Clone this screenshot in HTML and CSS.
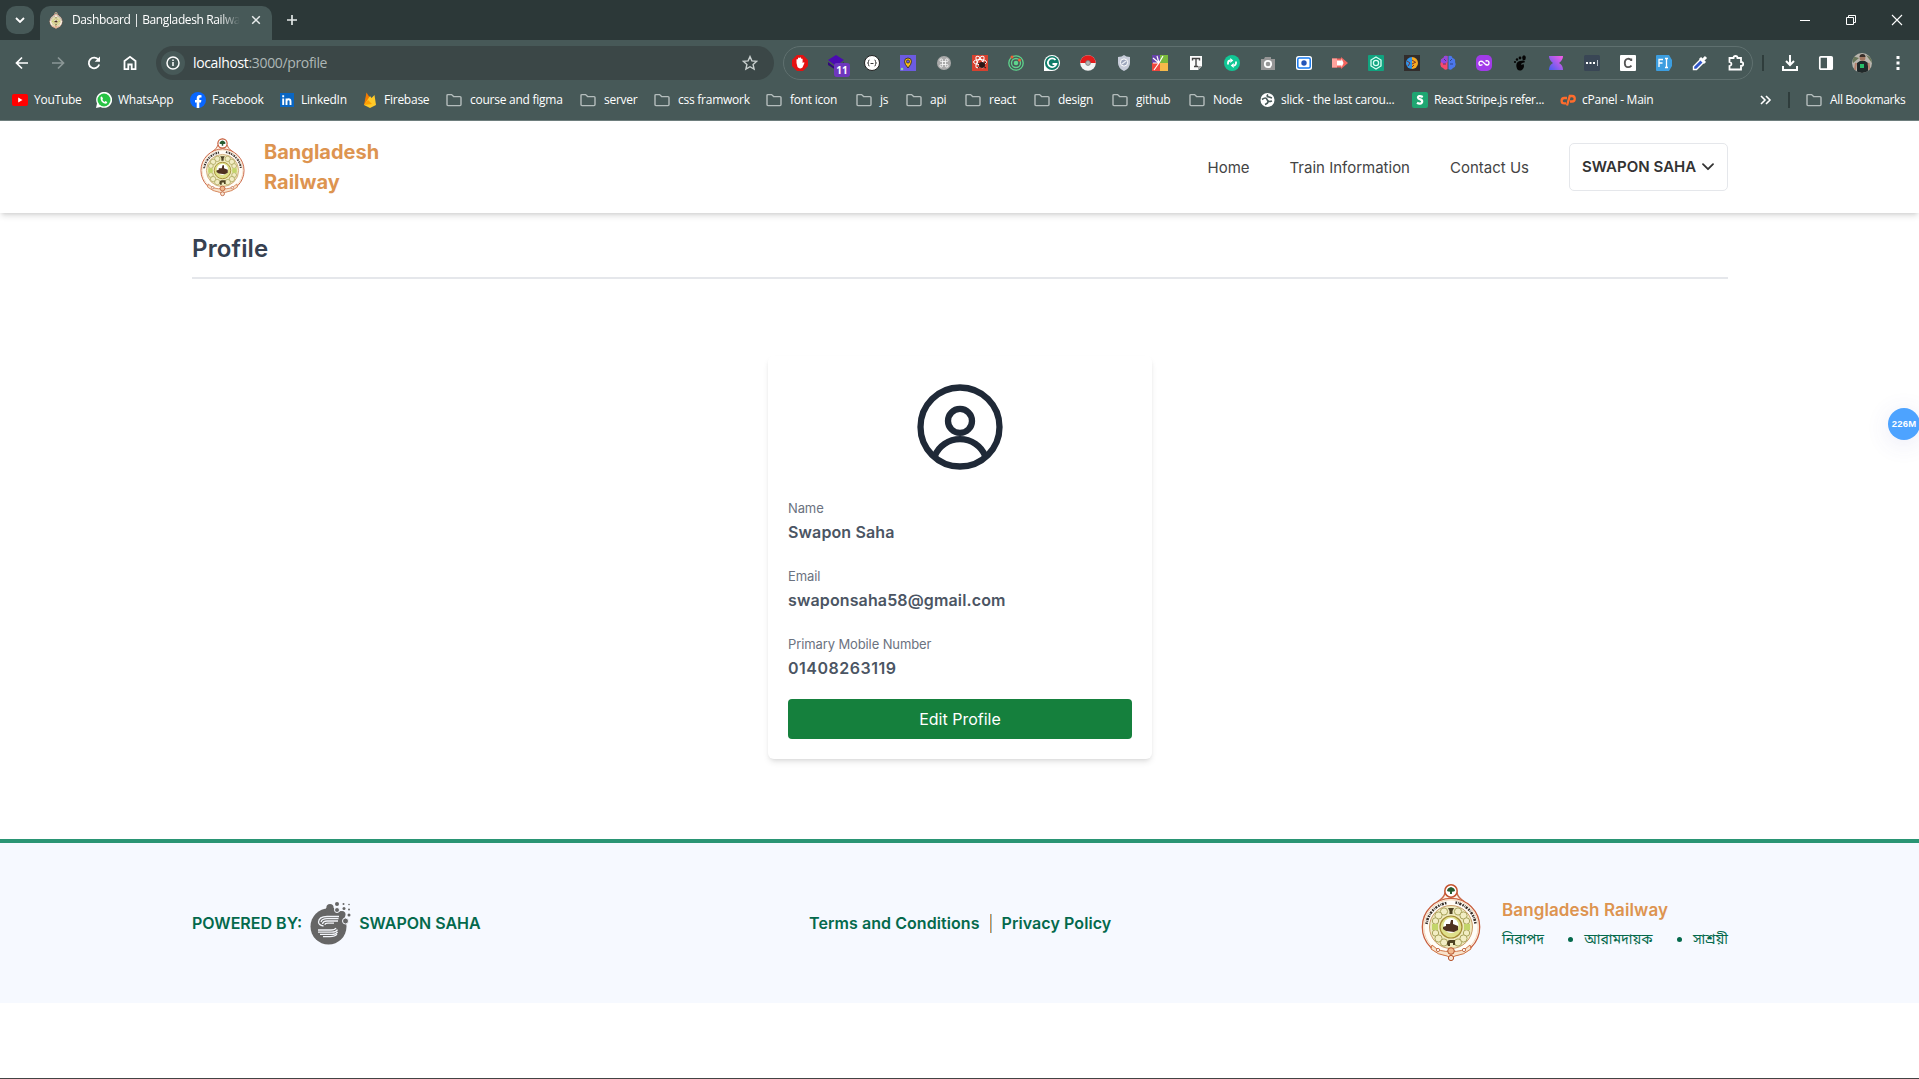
FILE: index.html
```html
<!DOCTYPE html>
<html lang="en">
<head>
<meta charset="utf-8">
<title>Dashboard | Bangladesh Railway</title>
<link rel="stylesheet" href="styles.css">
</head>
<body>
<svg class="sprite" aria-hidden="true">
  <symbol id="folder" viewBox="0 0 16 16"><path d="M1 3.6q0-1 1-1h3.6l2 2H14q1 0 1 1v7q0 1-1 1H2q-1 0-1-1z" fill="none" stroke="#b4bdbc" stroke-width="1.4"/></symbol>
  <symbol id="emblem" viewBox="0 0 60 78">
    <path d="M16 18q7-4 8-9h12q1 5 8 9" fill="#fff4e8" stroke="#c96a48" stroke-width="1.300"/>
    <circle cx="30" cy="7" r="6.200" fill="#fff" stroke="#c4532f" stroke-width="1.500"/>
    <circle cx="30" cy="43" r="28.700" fill="#fffdf8" stroke="#c8603f" stroke-width="1.300"/>
    <circle cx="30" cy="43" r="27.200" fill="none" stroke="#f0cda9" stroke-width=".8"/>
    <path d="M26 7q0-3 4-4 4 1 4 4-2 1-3 .6V10h-2V7.600Q28 8 26 7z" fill="#285b31"/>
    <path d="M5.500 40a24.500 24.500 0 0 1 20-21M34.500 18.500a24.500 24.500 0 0 1 20 21.500" fill="none" stroke="#3a3029" stroke-width="2.600" stroke-dasharray="1.600 .9 .7 .8 2.200 1.100"/>
    <circle cx="30" cy="43" r="21.500" fill="#efeabf" stroke="#c99a68" stroke-width="1"/>
    <g fill="#f2edc4" stroke="#a9a45c" stroke-width="1">
      <circle cx="37" cy="27.500" r="3.600"/><circle cx="23" cy="27.500" r="3.600"/><circle cx="42.500" cy="31.500" r="3.600"/><circle cx="17.500" cy="31.500" r="3.600"/>
      <circle cx="45.500" cy="37" r="3.200"/><circle cx="14.500" cy="37" r="3.200"/><circle cx="45.500" cy="49" r="3.200"/><circle cx="14.500" cy="49" r="3.200"/>
      <circle cx="42.500" cy="54.500" r="3.600"/><circle cx="17.500" cy="54.500" r="3.600"/><circle cx="37" cy="58.500" r="3.600"/><circle cx="23" cy="58.500" r="3.600"/>
    </g>
    <path d="M11 40h6v6h-6zM43 40h6v6h-6z" fill="#c3d56a"/>
    <circle cx="30" cy="43" r="11" fill="#dfe08a" stroke="#a38a35" stroke-width="1.200"/>
    <circle cx="30" cy="41.500" r="7.500" fill="#fff"/>
    <path d="M22 43l3-1v-2h4l1-4h2v4l5 2v4l-4 2-8-1-3-2z" fill="#4f3221"/>
    <path d="M27 24h6l-1.500 3v3h-3v-3zM26 60q0-4 3-4h5v5h-2v-2h-3v3h-2z" fill="#4e4223"/>
    <path d="M11 61q8 8 19 6 11 2 19-6l1 4q-7 6-16 7l-4 2-4-2q-9-1-16-7z" fill="#f8e3cb" stroke="#cf7446" stroke-width="1"/>
    <circle cx="30" cy="67" r="3.300" fill="#f1b98e" stroke="#b5532c"/>
    <circle cx="30" cy="74" r="2.600" fill="#f9e7d5" stroke="#b5532c"/>
    <circle cx="17" cy="66" r="1.600" fill="#fff" stroke="#b5532c" stroke-width=".8"/><circle cx="43" cy="66" r="1.600" fill="#fff" stroke="#b5532c" stroke-width=".8"/>
  </symbol>
</svg>

<div class="browser">
  <div class="tabstrip">
    <div class="tab-search"><svg width="10" height="6" viewBox="0 0 10 6"><path d="M1 1l4 4 4-4" fill="none" stroke="#fff" stroke-width="1.800"/></svg></div>
    <div class="tab">
      <svg class="favicon" width="14" height="17"><use href="#emblem"/></svg>
      <span class="tab-title">Dashboard | Bangladesh Railway</span>
      <svg width="10" height="10" viewBox="0 0 10 10"><path d="M1.200 1.200l7.600 7.600M8.800 1.200L1.200 8.800" stroke="#e8ecec" stroke-width="1.500"/></svg>
    </div>
    <svg class="plus" width="12" height="12" viewBox="0 0 12 12"><path d="M6 1v10M1 6h10" stroke="#e3e8e7" stroke-width="1.700"/></svg>
    <div class="window-buttons">
      <svg width="12" height="12" viewBox="0 0 12 12"><path d="M1 6.500h10" stroke="#fff"/></svg>
      <svg width="12" height="12" viewBox="0 0 12 12"><path d="M1.500 3.500h7v7h-7zM3.500 3.500v-2h7v7h-2" fill="none" stroke="#fff"/></svg>
      <svg width="12" height="12" viewBox="0 0 12 12"><path d="M1 1l10 10M11 1L1 11" stroke="#fff" stroke-width="1.100"/></svg>
    </div>
  </div>

  <div class="toolbar">
    <div class="nav-buttons">
      <svg viewBox="0 0 16 16"><path d="M14 8H3M8 2.500L2.500 8 8 13.500" fill="none" stroke="#fff" stroke-width="1.700"/></svg>
      <svg viewBox="0 0 16 16"><path d="M2 8h11M8 2.500L13.500 8 8 13.500" fill="none" stroke="#8b9796" stroke-width="1.700"/></svg>
      <svg viewBox="0 0 16 16"><path d="M13.200 9.500A5.300 5.300 0 1 1 12.500 5" fill="none" stroke="#fff" stroke-width="1.800"/><path d="M14 1.500v5.300H8.700z" fill="#fff"/></svg>
      <svg viewBox="0 0 16 16"><path d="M2.500 6L8 1.800 13.500 6v8.200H9.700V9.500H6.300v4.700H2.500z" fill="none" stroke="#fff" stroke-width="1.800"/></svg>
    </div>
    <div class="address">
      <span class="site-info"><svg width="14" height="14" viewBox="0 0 14 14"><circle cx="7" cy="7" r="6" fill="none" stroke="#fff" stroke-width="1.500"/><path d="M7 6v4M7 3.500v1.500" stroke="#fff" stroke-width="1.500"/></svg></span>
      <span class="url"><b>localhost</b>:3000/profile</span>
      <svg class="star" width="16" height="16" viewBox="0 0 16 16"><path d="M8 1.600l1.900 4.300 4.700.5-3.500 3.100 1 4.600L8 11.700l-4.100 2.400 1-4.600L1.400 6.400l4.700-.5z" fill="none" stroke="#c9d0cf" stroke-width="1.400"/></svg>
    </div>
    <div class="extensions">
      <svg viewBox="0 0 16 16"><path d="M5 0h6l5 5v6l-5 5H5l-5-5V5z" fill="#e31111"/><path d="M4.500 8V4.500q.8-.8 1.500 0V3q.8-.8 1.500 0 .8-1.300 1.600 0v1q.9-.8 1.500 0v4l1.200-.8q1 .1.500 1L10.500 12.500q-3 2-5-.5z" fill="#fff"/></svg>
      <span class="ext-badged"><svg viewBox="0 0 16 16"><path d="M8 0l8 5-8 6-8-6z" fill="#4b0bb2"/><path d="M0 7l8 6 8-6v3l-8 5-8-5z" fill="#32087c"/></svg><span class="badge">11</span></span>
      <svg viewBox="0 0 16 16"><circle cx="8" cy="8" r="7.500" fill="#fff" stroke="#222"/><path d="M5.500 5Q4.300 5 4.500 6.500T3.500 8q1.200 0 1 1.500T5.500 11M10.500 5q1.200 0 1 1.500t1 1.500q-1.200 0-1 1.500t-1 1.500M6.500 8.500h3" fill="none" stroke="#222" stroke-width=".9"/></svg>
      <svg viewBox="0 0 16 16"><path d="M0 0h16v16H0z" fill="#6c5be0"/><path d="M8 13Q4.500 9 4.500 6.500a3.500 3.500 0 0 1 7 0Q11.500 9 8 13z" fill="#f9bd13" stroke="#222" stroke-width=".8"/><circle cx="8" cy="6.500" r="1.600" fill="#6c5be0" stroke="#222" stroke-width=".7"/><circle cx="2" cy="14" r="1.300" fill="#8fd6a0"/></svg>
      <svg viewBox="0 0 16 16"><circle cx="8" cy="8" r="7" fill="#aaa"/><path d="M6.500 6.500h3v3h-3zM6.500 6.500h-1a1.300 1.300 0 1 1 1-1zM9.500 6.500v-1a1.300 1.300 0 1 1 1 1zM9.500 9.500h1a1.300 1.300 0 1 1-1 1zM6.500 9.500v1a1.300 1.300 0 1 1-1-1z" fill="none" stroke="#fff" stroke-width=".8"/></svg>
      <svg viewBox="0 0 16 16"><path d="M0 0h16v16H0z" fill="#d8412f"/><g fill="none" stroke="#fff"><ellipse cx="8" cy="7" rx="6.500" ry="2.500"/><ellipse cx="8" cy="7" rx="6.500" ry="2.500" transform="rotate(60 8 7)"/><ellipse cx="8" cy="7" rx="6.500" ry="2.500" transform="rotate(120 8 7)"/></g><circle cx="10" cy="10" r="3" fill="#2a1515"/><path d="M6 8l8 5M6 13l8-6" stroke="#2a1515"/></svg>
      <svg viewBox="0 0 16 16"><g fill="none" stroke="#5fd38c" stroke-width="1.300"><circle cx="8" cy="8" r="7.200"/><circle cx="8" cy="8" r="4.500"/></g><circle cx="8" cy="8" r="2.300" fill="#5fd38c"/><circle cx="4" cy="2" r="1.500" fill="#ef5f37"/><circle cx="11.500" cy="5" r="1.500" fill="#ef5f37"/></svg>
      <svg viewBox="0 0 16 16"><path d="M0 16V8a8 8 0 1 1 8 8z" fill="#fff"/><circle cx="8" cy="8" r="7" fill="#0e7b68"/><path d="M11.500 5A4.300 4.300 0 1 0 12.300 9H8.500" fill="none" stroke="#fff" stroke-width="1.800"/></svg>
      <svg viewBox="0 0 16 16"><circle cx="8" cy="8" r="7.800" fill="#f3f3f3"/><path d="M.2 8a7.800 7.800 0 0 1 15.600 0z" fill="#e31b1b"/><circle cx="8" cy="8" r="2.400" fill="#b5b5b5" stroke="#777" stroke-width=".8"/></svg>
      <svg viewBox="0 0 16 16"><path d="M2 2q4 0 6-2 2 2 6 2v6q0 5-6 8-6-3-6-8z" fill="#c7ccd9"/><circle cx="8" cy="7.500" r="3.600" fill="#9ca5bb" stroke="#fff"/><path d="M6 9l4-3" stroke="#e9edf4" stroke-width="1.500"/></svg>
      <svg viewBox="0 0 16 16"><path d="M0 0h8v8H0z" fill="#6743a9"/><path d="M8 0h8v8H8z" fill="#7ab93c"/><path d="M0 8h8v8H0z" fill="#ef473e"/><path d="M8 8h8v8H8z" fill="#f6b94a"/><path d="M7 8L1 3M7 8L5 1M7 8l4-7M7 8H1M7 8l-5 7" stroke="#fff" stroke-width="1.200"/></svg>
      <svg viewBox="0 0 16 16"><path d="M2 1h12v10l-4 4H2z" fill="#fbfbfb"/><path d="M14 11h-4v4z" fill="#aaa"/><path d="M4.500 5.500v-2h7v2M8 3.500v8M6 11.500h4" fill="none" stroke="#444" stroke-width="1.400"/></svg>
      <svg viewBox="0 0 16 16"><circle cx="8" cy="8" r="8" fill="#11c795"/><path d="M4 9.500V8a2.500 2.500 0 0 1 2.500-2.500M12 6.500V8a2.500 2.500 0 0 1-2.500 2.500" fill="none" stroke="#fff" stroke-width="1.800"/><path d="M6.300 3l3 2.500-3 2.500zM9.700 8l-3 2.500 3 2.500z" fill="#fff"/></svg>
      <svg viewBox="0 0 16 16"><path d="M1 4h3l1-2h6v2h4v11H1z" fill="#969696"/><circle cx="8" cy="9" r="3.200" fill="#969696" stroke="#fff" stroke-width="1.800"/></svg>
      <svg viewBox="0 0 16 16"><rect y="1" width="16" height="14" rx="2.500" fill="#fff"/><rect x="1.800" y="3" width="12.400" height="10" rx="1.500" fill="#fff" stroke="#1679ef" stroke-width="1.500"/><circle cx="8" cy="8" r="2.700" fill="#2455b8"/></svg>
      <svg viewBox="0 0 16 16"><path d="M0 3.500h9V2l7 6-7 6v-1.500H0z" fill="#f4645e"/><path d="M0 3.500h5v9H0z" fill="#ffa39d"/><path d="M5 5.500h4.500v-2l2 4.500-2 4.500v-2H5z" fill="#fff"/></svg>
      <svg viewBox="0 0 16 16"><rect width="16" height="16" rx="1" fill="#10a37f"/><path d="M8 2l5 3v6l-5 3-5-3V5z" fill="none" stroke="#d8fff3" stroke-width="1.300"/><circle cx="8" cy="8" r="2.600" fill="none" stroke="#d8fff3" stroke-width="1.300"/></svg>
      <svg viewBox="0 0 16 16"><path d="M0 0h16v16H0z" fill="#322d2c"/><path d="M8 2a6 6 0 1 0 0 12z" fill="#3294e7"/><path d="M8 2a6 6 0 1 1 0 12z" fill="#f6aa22"/><path d="M3 6l3 2-2 3M8 5l3 2M8 9l4-2M8 12l2-2" stroke="#733" fill="none"/></svg>
      <svg viewBox="0 0 16 16"><path d="M7.500 1Q4 0 3.500 3 0 4 1 7q-2 4 2 6 2 3 4.500 1z" fill="#f7486d"/><path d="M6 1Q4 0 3.500 3 0 4 1 7l3 2 3.500-2V1z" fill="#9347df"/><path d="M8.500 1Q12 0 12.500 3 16 4 15 7q2 4-2 6-2 3-4.500 1z" fill="#4b77ed"/><path d="M4 4l2 2M3 9h3M12 4l-2 2M13 9h-3" stroke="#27315f" fill="none" stroke-width=".7"/></svg>
      <svg viewBox="0 0 16 16"><rect width="16" height="16" rx="5" fill="#a13be9"/><path d="M6.500 9.500Q3 11.500 3 8.500T6.500 6.500l3 3Q13 11 13 8T9.500 6" fill="none" stroke="#fff" stroke-width="1.400"/></svg>
      <svg viewBox="0 0 16 16"><path d="M8 6q6-1.500 4.500 1.500-3.500.500-3.500 2 1 .5 2.500-.5 1.500 3.500-1.500 6-4.500 2-5.500-3Q3.500 7 8 6z" fill="#050505"/><ellipse cx="12" cy="2.700" rx="1.800" ry="2.500" fill="#050505"/><circle cx="8" cy="3" r="1.400" fill="#050505"/><circle cx="5" cy="4.500" r="1.200" fill="#050505"/><circle cx="3" cy="7" r="1.100" fill="#050505"/></svg>
      <svg viewBox="0 0 16 16"><defs><linearGradient id="hg" x1="1" y1="0" x2="0" y2="1"><stop stop-color="#fb5ce7"/><stop offset="1" stop-color="#445cf0"/></linearGradient></defs><path d="M1 1h14q0 4-4 7 4 2 4 7H1q0-5 4-7Q1 5 1 1z" fill="url(#hg)"/></svg>
      <svg viewBox="0 0 16 16"><rect width="16" height="16" rx="1.500" fill="#394655"/><path d="M2 8h2M5.500 8h2M9 8h2" stroke="#fff" stroke-width="2"/><path d="M13.500 5v6" stroke="#b8c0c9"/></svg>
      <svg viewBox="0 0 16 16"><rect width="16" height="16" rx="1" fill="#fff"/><path d="M11.300 6V3.500M11.300 5.500Q9.500 3 7 4 4.500 5 4.800 8.500 5 12 8 12.200q2 0 3.500-1.600" fill="none" stroke="#555" stroke-width="1.800"/></svg>
      <svg viewBox="0 0 16 16"><path d="M1 0h12l3 5v6l-3 5H1q-1 0-1-1V1q0-1 1-1z" fill="#3c9ee0"/><path d="M3 12V4.500h4M3 8h3.500M9 3.500h3M9 12.500h3M10.500 3.500v9" fill="none" stroke="#fff" stroke-width="1.300"/></svg>
      <svg viewBox="0 0 16 16"><path d="M9 4l3 3-7.500 7.500H1.500v-3z" fill="#3156c9" stroke="#fff" stroke-width="1.400"/><path d="M8 3l5 5M11 5l3-3" stroke="#fff" stroke-width="3"/></svg>
      <svg viewBox="0 0 16 16"><path d="M1.500 3h4q0-2 2-2t2 2H13v4q2.300 0 2.300 2T13 11v3.500H1.500V11q2-.5 2-2t-2-2z" fill="none" stroke="#fff" stroke-width="1.800"/></svg>
    </div>
    <div class="tool-actions">
      <i class="divider"></i>
      <svg viewBox="0 0 16 16"><path d="M8 0v9.500M4 6l4 4 4-4M1 11v4h14v-4" fill="none" stroke="#fff" stroke-width="2"/></svg>
      <svg viewBox="0 0 16 16"><rect x="1.800" y="1.800" width="12.400" height="12.400" rx="1" fill="none" stroke="#fff" stroke-width="1.700"/><path d="M9 2h5v12H9z" fill="#fff"/></svg>
      <svg class="avatar" viewBox="0 0 20 20"><defs><clipPath id="face"><circle cx="10" cy="10" r="10"/></clipPath></defs><g clip-path="url(#face)"><path d="M0 0h20v20H0z" fill="#b9b5ad"/><path d="M0 3l7 2-6 5zM14 2l6 3v5z" fill="#687659"/><path d="M5 20V10l3-2h5l3 2v10z" fill="#20292a"/><circle cx="10.500" cy="5" r="2.900" fill="#a27761"/><path d="M7.500 4q0-3 3-3t3 3z" fill="#3a302b"/><path d="M8 11h4v4H8z" fill="#28bd68"/><path d="M4 10l-1 7M16.500 10l1 7" stroke="#b6806c" stroke-width="2"/></g></svg>
      <svg viewBox="0 0 16 16"><path d="M8 1v3M8 6.500v3M8 12v3" stroke="#fff" stroke-width="3"/></svg>
    </div>
  </div>

  <div class="bookmarks">
    <span><svg viewBox="0 0 16 16"><rect y="2" width="16" height="12" rx="2" fill="#f00"/><path d="M6.200 5.500L10.500 8l-4.300 2.500z" fill="#fff"/></svg>YouTube</span>
    <span><svg viewBox="0 0 16 16"><path d="M0 16l1-4.500A8 8 0 1 1 4.500 15z" fill="#fff"/><circle cx="8" cy="8" r="6.500" fill="#27c344"/><path d="M4.500 5.500q1-2 2 0L7 7l-.7.700q.8 1.500 2.200 2.200l.8-.8 2 1q.2 1.500-2 1.700-4.700-1-4.800-6.300z" fill="#fff"/></svg>WhatsApp</span>
    <span><svg viewBox="0 0 16 16"><circle cx="8" cy="8" r="8" fill="#0866ff"/><path d="M6.700 16v-5.500H5V8h1.700V6.500Q6.700 3 9.700 3l1.800.2v2.200h-1Q9.300 5.400 9.300 6.500V8h2.100l-.4 2.500H9.300V16z" fill="#fff"/></svg>Facebook</span>
    <span><svg viewBox="0 0 16 16"><path d="M1 1h14v14H1z" fill="#0a66c2"/><path d="M4.200 6.500V13M4.200 3.200v2M7.500 6.500V13M7.500 9.500q0-2.200 2-2.200t2 2.200V13" fill="none" stroke="#fff" stroke-width="1.900"/></svg>LinkedIn</span>
    <span><svg viewBox="0 0 16 16"><path d="M2 13L4.500.5 8 6z" fill="#f57c00"/><path d="M2 13l6-9 1.500 2L12.500 3 14 13l-6 3z" fill="#ffca28"/><path d="M2 13l4-5 4 4z" fill="#ffa000"/></svg>Firebase</span>
    <span class="dir"><svg><use href="#folder"/></svg>course and figma</span>
    <span class="dir"><svg><use href="#folder"/></svg>server</span>
    <span class="dir"><svg><use href="#folder"/></svg>css framwork</span>
    <span class="dir"><svg><use href="#folder"/></svg>font icon</span>
    <span class="dir"><svg><use href="#folder"/></svg>js</span>
    <span class="dir"><svg><use href="#folder"/></svg>api</span>
    <span class="dir"><svg><use href="#folder"/></svg>react</span>
    <span class="dir"><svg><use href="#folder"/></svg>design</span>
    <span class="dir"><svg><use href="#folder"/></svg>github</span>
    <span class="dir"><svg><use href="#folder"/></svg>Node</span>
    <span class="slick"><svg viewBox="0 0 16 16"><circle cx="7.500" cy="8" r="7" fill="#fff"/><path d="M2 7.500q4-3 5 0t5 1.500M5 12.500q3-1 3-3M8 2.500q-2 2 1 2.500l3 1" fill="none" stroke="#475958" stroke-width="1.700"/></svg>slick - the last carou...</span>
    <span><svg viewBox="0 0 16 16"><rect width="16" height="16" rx="2" fill="#1fa672"/><path d="M10.800 5Q9 4 7.500 4.100 5.700 4.300 6 5.800 6.200 7 8.300 7.400 10.300 8 10.200 9.700 10 11.500 8 11.600q-1.600.1-3-.8" fill="none" stroke="#fff" stroke-width="2.200"/></svg><em>React Stripe.js refer...</em></span>
    <span><svg viewBox="0 0 16 16"><path d="M7 6H4.300a2.700 2.700 0 0 0 0 5.400H6M7 13.500L9.800 4H12a2.500 2.500 0 0 1 0 5.500h-2" fill="none" stroke="#ff6c2c" stroke-width="2.300"/></svg>cPanel - Main</span>
    <span class="more"><svg viewBox="0 0 16 16"><path d="M3 4l4 4-4 4M8 4l4 4-4 4" fill="none" stroke="#fff" stroke-width="1.600"/></svg></span>
    <span class="sep"><i class="divider"></i></span>
    <span class="dir"><svg><use href="#folder"/></svg><em>All Bookmarks</em></span>
  </div>
</div>

<header class="site-header">
  <div class="container header-row">
    <div class="brand">
      <svg width="45" height="59"><use href="#emblem"/></svg>
      <span>Bangladesh<br>Railway</span>
    </div>
    <nav class="menu">
      <a>Home</a><a>Train Information</a><a>Contact Us</a>
      <button class="user-button">SWAPON SAHA <svg width="12" height="8" viewBox="0 0 12 8"><path d="M1 1.200l5 5 5-5" fill="none" stroke="#333" stroke-width="1.800" stroke-linecap="round" stroke-linejoin="round"/></svg></button>
    </nav>
  </div>
</header>

<main class="container">
  <h1>Profile</h1>
  <section class="card">
    <svg class="person" width="86" height="86" viewBox="0 0 86 86" fill="none" stroke="#1f2937" stroke-width="6.300"><circle cx="43" cy="43" r="39.500"/><circle cx="43" cy="36.900" r="12"/><path d="M17.500 72.500a27.400 27.400 0 0 1 51 0"/></svg>
    <dl>
      <dt>Name</dt><dd>Swapon Saha</dd>
      <dt>Email</dt><dd>swaponsaha58@gmail.com</dd>
      <dt>Primary Mobile Number</dt><dd class="phone">01408263119</dd>
    </dl>
    <button class="edit">Edit Profile</button>
  </section>
</main>

<footer class="site-footer">
  <div class="container footer-row">
    <div class="powered">
      <span>POWERED BY:</span>
      <svg width="41" height="43" viewBox="0 0 41 43"><g fill="#666"><circle cx="18.500" cy="24.500" r="18"/><circle cx="20" cy="5.500" r="3.600"/><path d="M16 6h8l1 6 6-3 4 5-3 8-17-5z"/><circle cx="32" cy="12.500" r="3.500"/><circle cx="27" cy="2" r="2"/><circle cx="27" cy="8" r="2.500" stroke="#f6f9ff"/><circle cx="35.500" cy="19" r="3" stroke="#f6f9ff"/><circle cx="34" cy="6.500" r="1.500"/><circle cx="39" cy="13" r="1.500"/><circle cx="33.500" cy="2" r="1"/><circle cx="39" cy="2.500" r=".8"/><circle cx="39" cy="7.500" r="1"/></g><g fill="none" stroke="#f3f5fa" stroke-width="1.300"><path d="M29 14.500H17q-8 0-8.500 5.500 0 3 5 4M28.500 16.700H17q-5 0-6 3.300M28 19H17q-4 0-4.500 3M24 21.200h-6q-3 0-3 1.500"/><path d="M8 28h13q4 0 5-2M8 30.200h14q4 0 5.500-2.500M10 32.400h12q4 0 5.500-2.500M13 34.600h7q5 0 7-2.500"/></g></svg>
      <span>SWAPON SAHA</span>
    </div>
    <div class="legal"><a>Terms and Conditions</a><i></i><a>Privacy Policy</a></div>
    <div class="footer-brand">
      <svg width="60" height="78"><use href="#emblem"/></svg>
      <div>
        <strong>Bangladesh Railway</strong>
        <ul><li>নিরাপদ</li><li>আরামদায়ক</li><li>সাশ্রয়ী</li></ul>
      </div>
    </div>
  </div>
</footer>
<div class="memory-bubble">226M</div>
<div class="taskbar-edge"></div>
</body>
</html>
```
FILE: styles.css
```css
* { box-sizing: border-box; }
body {
  margin: 0;
  height: 1079px;
  overflow: hidden;
  position: relative;
  display: flex;
  flex-direction: column;
  background: #fff;
  font-family: Inter, sans-serif;
}
svg { display: block; flex: none; }
.sprite { position: absolute; width: 0; height: 0; }
button { font: inherit; cursor: pointer; }

/* Browser window */
.browser {
  height: 121px;
  flex: none;
  background: #475958;
  border-bottom: 1px solid #6f7f7e;
  color: #fff;
  font: 12px/16px "Open Sans", sans-serif;
}
.tabstrip {
  height: 40px;
  display: flex;
  align-items: center;
  padding-left: 6px;
  background: #2c3838;
}
.tab-search {
  width: 28px;
  height: 28px;
  border-radius: 10px;
  background: #475958;
  display: grid;
  place-items: center;
}
.tab {
  width: 232px;
  height: 34px;
  margin: 6px 0 0 6px;
  padding: 0 11px 6px 9px;
  border-radius: 10px 10px 0 0;
  background: #475958;
  display: flex;
  align-items: center;
}
.tab-title {
  width: 168px;
  margin: 0 11px 0 9px;
  overflow: hidden;
  white-space: nowrap;
  letter-spacing: -.38px;
  -webkit-mask-image: linear-gradient(90deg, #000 88%, transparent);
  mask-image: linear-gradient(90deg, #000 88%, transparent);
}
.plus { margin-left: 14px; }
.window-buttons { display: flex; gap: 34px; margin-left: auto; padding-right: 16px; }

.toolbar { height: 46px; display: flex; align-items: center; padding-left: 14px; }
.nav-buttons { display: flex; gap: 20px; width: 142px; }
.nav-buttons svg, .extensions svg, .tool-actions svg { width: 16px; height: 16px; }
.address {
  width: 618px;
  height: 34px;
  border-radius: 17px;
  background: #3b4747;
  display: flex;
  align-items: center;
  padding: 0 16px 0 5px;
}
.site-info {
  width: 24px;
  height: 24px;
  margin-right: 8px;
  border-radius: 50%;
  background: #475958;
  display: grid;
  place-items: center;
}
.url { font-size: 14px; letter-spacing: -.35px; color: #aeb7b6; }
.url b { font-weight: 400; color: #fff; }
.star { margin-left: auto; }
.extensions {
  width: 970px;
  height: 34px;
  margin-left: 9px;
  padding-left: 8px;
  border: 1px solid #5f706f;
  border-radius: 17px;
  display: flex;
  align-items: center;
  gap: 20px;
}
.ext-badged { position: relative; }
.badge {
  position: absolute;
  left: 6px;
  top: 8px;
  width: 16px;
  height: 14px;
  border-radius: 3px;
  background: #6e37bd;
  font: 700 10px/14px "Open Sans", sans-serif;
  text-align: center;
}
.tool-actions { display: flex; align-items: center; gap: 20px; margin-left: 9px; }
.divider { display: block; width: 2px; height: 16px; background: #2f3d3c; }
.tool-actions .divider { margin-right: -2px; }
.tool-actions .avatar { width: 20px; height: 20px; margin: 0 -2px; }

.bookmarks {
  height: 28px;
  padding-left: 12px;
  display: grid;
  align-items: center;
  grid-template-columns: 84px 94px 89px 83px 84px 134px 74px 112px 90px 50px 59px 69px 78px 77px 71px 152px 148px 198px 30px 18px 100px;
  letter-spacing: -.25px;
  white-space: nowrap;
}
.bookmarks span { display: flex; align-items: center; gap: 6px; }
.bookmarks .dir { gap: 8px; }
.bookmarks .slick { gap: 5px; }
.bookmarks svg { width: 16px; height: 16px; }
.bookmarks em { font-style: normal; letter-spacing: -.36px; }

/* Railway site */
.container { width: 1536px; margin: 0 0 0 192px; flex: none; }
.site-header {
  height: 92px;
  flex: none;
  box-shadow: 0 4px 6px -1px rgba(0, 0, 0, .12), 0 2px 4px -2px rgba(0, 0, 0, .12);
}
.header-row { height: 92px; display: flex; align-items: center; justify-content: space-between; }
.brand {
  display: flex;
  align-items: center;
  gap: 19px;
  padding-left: 8px;
  color: #dd9450;
  font: 700 20px/30px Inter, sans-serif;
}
.menu { display: flex; align-items: center; gap: 40px; font-size: 15px; color: #444; }
.user-button {
  width: 159px;
  height: 48px;
  padding: 0 0 1px 12px;
  border: 1px solid #e5e7eb;
  border-radius: 5px;
  background: #fff;
  color: #333;
  font-weight: 600;
  letter-spacing: .03px;
  display: flex;
  align-items: center;
  gap: 6px;
}
main { height: 626px; }
h1 {
  margin: 0;
  padding: 18px 0 10px;
  height: 66px;
  border-bottom: 2px solid #e5e7eb;
  font: 600 24px/36px Inter, sans-serif;
  letter-spacing: .15px;
  color: #374151;
}
.card {
  width: 384px;
  height: 403px;
  margin: 77px auto 0;
  padding: 28px 20px 20px;
  border-radius: 6px;
  box-shadow: 0 4px 6px -1px rgba(0, 0, 0, .1), 0 2px 4px -2px rgba(0, 0, 0, .1);
}
.person { margin: 0 auto 28px; }
dl { margin: 0; height: 201px; }
dt { font-size: 13px; line-height: 20px; letter-spacing: -.11px; color: #6b7280; }
dd { margin: 1px 0 21px; font-size: 16px; line-height: 26px; font-weight: 600; letter-spacing: .13px; color: #4b5563; }
.phone { letter-spacing: .5px; }
.edit {
  width: 344px;
  height: 40px;
  border: 0;
  border-radius: 4px;
  background: #15803d;
  color: #fff;
  font-size: 16px;
}

.site-footer { height: 164px; flex: none; border-top: 4px solid #2a9574; background: #f6f9ff; }
.footer-row {
  height: 160px;
  display: grid;
  grid-template-columns: 617px 612px 307px;
  align-items: center;
  color: #04694c;
  font-size: 16px;
  font-weight: 600;
}
.powered { display: flex; align-items: center; gap: 8px; }
.legal { display: flex; align-items: center; gap: 10px; letter-spacing: .07px; }
.legal i { width: 2px; height: 19px; background: linear-gradient(90deg, #cf8f4d 50%, #8fbfd8 50%); }
.footer-brand { display: flex; align-items: center; gap: 21px; }
.footer-brand strong { display: block; padding-top: 4px; font-size: 17px; line-height: 26px; font-weight: 600; letter-spacing: .1px; color: #dd9450; }
.footer-brand ul {
  display: flex;
  justify-content: space-between;
  width: 226px;
  margin: 2px 0 0;
  padding: 0;
  list-style-position: outside;
  font: 400 14px/28px Inter, "Noto Sans Bengali", sans-serif;
}
.footer-brand li:first-child { list-style: none; }

.memory-bubble {
  position: absolute;
  left: 1888px;
  top: 408px;
  width: 32px;
  height: 32px;
  border-radius: 50%;
  background: #4da3ff;
  box-shadow: 0 4px 24px rgba(70, 70, 180, .12);
  color: #fff;
  font: 700 9.500px/32px "Liberation Sans", sans-serif;
  letter-spacing: .2px;
  text-align: center;
}
.taskbar-edge { position: absolute; left: 0; right: 0; bottom: 0; height: 1px; background: #444; }
```
